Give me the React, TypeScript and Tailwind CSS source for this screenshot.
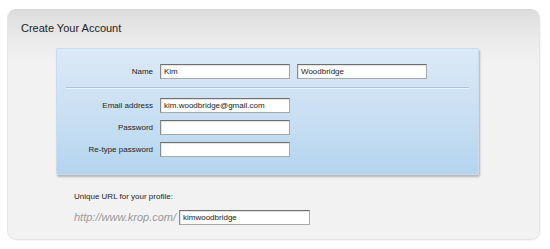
const font = { fontFamily: '"Liberation Sans", Arial, sans-serif' };

function Field({ value = "", w = "w-[130px]" }: { value?: string; w?: string }) {
  return (
    <div
      className={`${w} h-[15px] bg-white border border-[#a9a9a9] border-t-[#6f6f6f] border-l-[#8a8a8a] shadow-[inset_1px_1px_1px_rgba(0,0,0,0.12)] text-[8px] leading-[13px] pl-[3px] text-[#222]`}
    >
      {value}
    </div>
  );
}

function Row({ label, children }: { label: string; children: React.ReactNode }) {
  return (
    <div className="flex items-center h-[15px]">
      <div className="w-[96px] text-right text-[8px] text-[#222]">{label}</div>
      <div className="flex gap-[7px] ml-[7px]">{children}</div>
    </div>
  );
}

export default function App() {
  return (
    <div className="w-[550px] h-[249px] bg-white pt-[9px] pl-[7px]" style={font}>
      <div className="w-[533px] h-[231px] rounded-[9px] bg-[linear-gradient(#dcdcdc_0px,#ebebeb_30px,#f2f2f2_55px,#f2f2f2)] border border-[#e4e4e4] border-t-[#d6d6d6] shadow-[1px_1px_1px_rgba(0,0,0,0.04)]">
        <div className="pt-[12px] pl-[13px] text-[11px] leading-[13px] text-[#222]">Create Your Account</div>
        <div className="ml-[48px] mt-[13px] w-[423px] h-[127px] rounded-[2px] bg-[linear-gradient(#dce9f6,#c6def2_60%,#b3d4ee)] border border-[#c9dcee] shadow-[1px_2px_2px_rgba(0,0,0,0.25)] pt-[15px]">
          <Row label="Name">
            <Field value="Kim" />
            <Field value="Woodbridge" />
          </Row>
          <div className="mx-[9px] mt-[8px] mb-[9px] h-[2px] border-t border-[#a9c4dc] border-b border-b-[#eaf3fb]" />
          <div className="flex flex-col gap-[7px]">
            <Row label="Email address">
              <Field value="kim.woodbridge@gmail.com" />
            </Row>
            <Row label="Password">
              <Field />
            </Row>
            <Row label="Re-type password">
              <Field />
            </Row>
          </div>
        </div>
        <div className="ml-[66px] mt-[17px]">
          <div className="text-[8px] leading-[10px] text-[#222]">Unique URL for your profile:</div>
          <div className="flex items-center mt-[7px]">
            <span className="italic text-[11px] text-[#9a9a9a] whitespace-nowrap w-[105px]">http://www.krop.com/</span>
            <Field value="kimwoodbridge" w="w-[131px]" />
          </div>
        </div>
      </div>
    </div>
  );
}
